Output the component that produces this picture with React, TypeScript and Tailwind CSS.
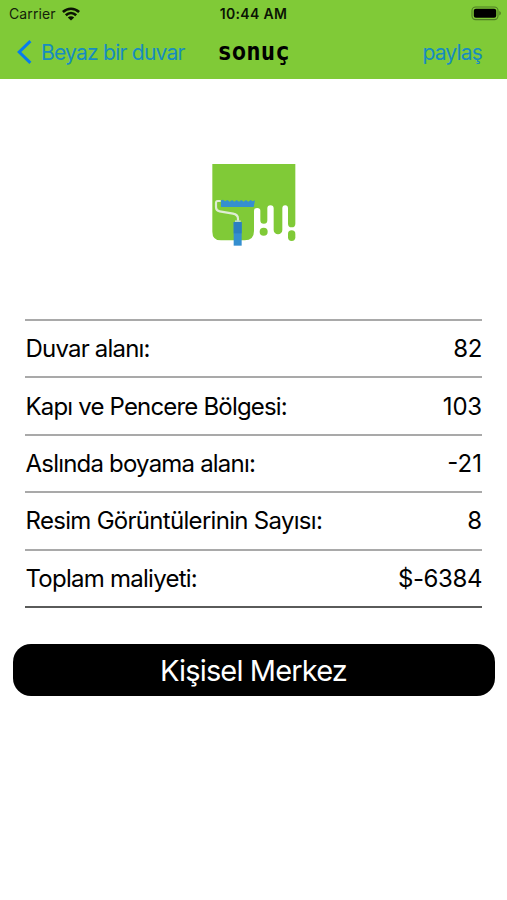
interface ResultRow {
  label: string;
  value: string;
  labelClass: string;
  valueClass: string;
}

const rows: ResultRow[] = [
  { label: 'Duvar alanı:', value: '82', labelClass: 'tracking-[-0.8px]', valueClass: 'tracking-[-0.4px]' },
  { label: 'Kapı ve Pencere Bölgesi:', value: '103', labelClass: 'tracking-[-0.82px]', valueClass: 'tracking-[-0.2px]' },
  { label: 'Aslında boyama alanı:', value: '-21', labelClass: 'tracking-[-0.8px]', valueClass: 'tracking-[0px]' },
  { label: 'Resim Görüntülerinin Sayısı:', value: '8', labelClass: 'tracking-[-0.7px]', valueClass: 'tracking-[0px]' },
  { label: 'Toplam maliyeti:', value: '$-6384', labelClass: 'tracking-[-0.75px]', valueClass: 'tracking-[-0.4px]' },
];

function WifiIcon() {
  return (
    <svg width="18" height="14" viewBox="0 0 18 14" fill="none" stroke="#0b1404" strokeWidth="2.6">
      <path d="M.9 5C5.6 .6 12.4 .6 17.1 5" />
      <path d="M3.8 8.2C6.9 5.3 11.1 5.3 14.2 8.2" />
      <path d="M9 13.6 5.8 10.5C7.6 8.8 10.4 8.8 12.2 10.5Z" fill="#0b1404" stroke="none" />
    </svg>
  );
}

function BatteryIcon() {
  return (
    <svg width="31" height="15" viewBox="0 0 31 15">
      <rect x="1" y="1" width="26" height="12.6" rx="3.6" fill="none" stroke="#4f7e24" strokeWidth="1.1" />
      <rect x="2.8" y="2.8" width="22.4" height="9" rx="2" fill="#000" />
      <path d="M28.3 5.1C30.4 5.9 30.4 8.7 28.3 9.5Z" fill="#4f7e24" />
    </svg>
  );
}

function PaintLogo() {
  return (
    <svg width="84" height="83" viewBox="36 27 252 249">
      <path
        d="M37 27H286V206A11 11 0 0 1 264 206V160A8.5 9 0 0 0 247 160V225A13 13 0 0 1 221 225V160A9.5 9 0 0 0 202 160V196A10.5 10.5 0 0 1 181 196V167A9.5 8 0 0 0 162 167V228Q162 256 134 256H63Q37 256 37 230Z"
        fill="#80ca37"
      />
      <circle cx="191" cy="230" r="12" fill="#80ca37" />
      <rect x="264" y="226" width="22" height="32" rx="11" fill="#80ca37" />
      <path
        d="M63 136 69 134 75 139 82 135 89 140 96 135 103 140 110 135 117 140 124 135 131 140 138 135 145 140 152 135 158 139 165 136 161 156H63Z"
        fill="#358fd0"
      />
      <path
        d="M62 138H53Q48 138 48 144V157Q48 167 59 169L99 176Q114 179 114 191V200"
        fill="none"
        stroke="#dfedd4"
        strokeWidth="6.5"
      />
      <path d="M105 196H122V204H105Z" fill="#b9dcc8" />
      <path d="M101 201H125V272H101Z" fill="#358fd0" />
      <path d="M101 201H125V235H101Z" fill="#2b7fc1" />
    </svg>
  );
}

export default function App() {
  return (
    <div className="flex h-[900px] w-[507px] flex-col overflow-hidden bg-white font-['Inter','Liberation_Sans',sans-serif] text-black">
      <header className="h-[79px] bg-[#80ca37]">
        <div className="grid h-[27px] grid-cols-[200px_1fr_200px] items-center text-[14px] leading-none">
          <div className="flex items-center gap-[6px] pl-[9px] text-[#14220a]">
            <span className="tracking-[0.1px]">Carrier</span>
            <WifiIcon />
          </div>
          <span className="text-center text-[14px] font-semibold tracking-[0.3px] text-[#0b1404]">10:44 AM</span>
          <div className="flex justify-end pr-[5px]">
            <BatteryIcon />
          </div>
        </div>
        <div className="grid h-[50px] grid-cols-[200px_1fr_200px] items-center text-[21px] leading-none">
          <div className="flex items-center gap-[9px] pl-[17px] text-[#178cc0]">
            <svg className="shrink-0" width="15" height="24" viewBox="0 0 15 24" fill="none" stroke="#087cec" strokeWidth="3">
              <path d="M13.4 1.2 2.2 12 13.4 22.8" />
            </svg>
            <span className="whitespace-nowrap tracking-[-0.75px]">Beyaz bir duvar</span>
          </div>
          <h1 className="text-center font-['DejaVu_Sans_Mono',monospace] text-[24px] font-bold">sonuç</h1>
          <span className="pr-[25px] text-right tracking-[-0.8px] text-[#178cc0]">paylaş</span>
        </div>
      </header>

      <main>
        <div className="flex justify-center pt-[85px]">
          <PaintLogo />
        </div>

        <div className="mx-[25px] mt-[72px] border-t-2 border-[#a9a9a9]">
          {rows.map((row) => (
            <div
              key={row.label}
              className="flex h-[57.4px] items-center justify-between border-b-2 border-[#a9a9a9] pt-px pl-[0.5px] text-[24px] leading-none last:border-[#5a5b5a]"
            >
              <span className={row.labelClass}>{row.label}</span>
              <span className={row.valueClass}>{row.value}</span>
            </div>
          ))}
        </div>

        <button className="ml-[13px] mt-[36px] flex h-[52px] w-[482px] items-center justify-center rounded-[18px] bg-black pt-[2px] pr-px text-[29px] leading-none tracking-[-0.85px] text-white">
          Kişisel Merkez
        </button>
      </main>
    </div>
  );
}
